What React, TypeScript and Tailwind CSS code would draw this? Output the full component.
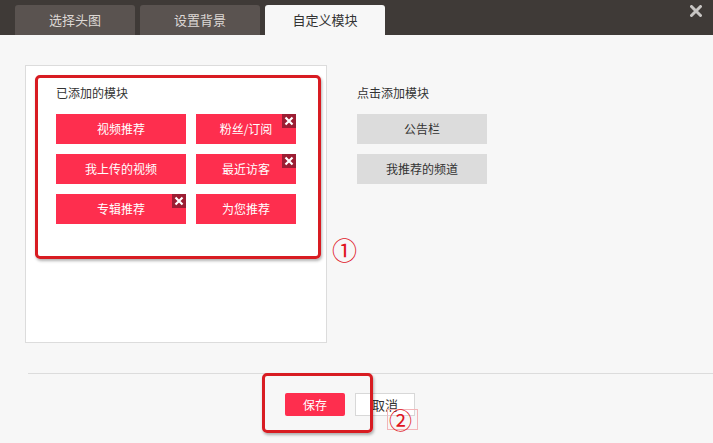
import { ReactNode } from 'react';

const FONT = { fontFamily: '"Noto Sans CJK SC", "Noto Sans", sans-serif' };

function Tab({ label, active }: { label: string; active?: boolean }) {
  return (
    <div
      className={
        'w-[120px] h-[30px] flex items-center justify-center text-[13px] rounded-t-[3px] ' +
        (active ? 'bg-[#f7f7f7] text-[#333]' : 'bg-[#5a5350] text-[#ddd8d5]')
      }
    >
      {label}
    </div>
  );
}

function Added({ label, wide, removable }: { label: string; wide?: boolean; removable?: boolean }) {
  return (
    <div
      className={
        'relative h-[30px] bg-[#fe2e4e] text-white text-[12px] flex items-center justify-center ' +
        (wide ? 'w-[130px]' : 'w-[100px]')
      }
    >
      {label}
      {removable && (
        <span className="absolute top-0 right-0 w-[14px] h-[14px] bg-[#9c1d33] flex items-center justify-center">
          <svg width="10" height="10" viewBox="0 0 10 10">
            <path d="M1.5 1.5 L8.5 8.5 M8.5 1.5 L1.5 8.5" stroke="white" strokeWidth="2.2" />
          </svg>
        </span>
      )}
    </div>
  );
}

function Mark({ children, className }: { children: ReactNode; className: string }) {
  return <div className={'absolute text-[#e0141e] leading-none ' + className}>{children}</div>;
}

export default function App() {
  return (
    <div className="relative w-[713px] h-[443px] overflow-hidden bg-[#f7f7f7]" style={FONT}>
      {/* tabs */}
      <div className="h-[35px] bg-[#3f3a37] flex items-end gap-[5px] pl-[15px]">
        <Tab label="选择头图" />
        <Tab label="设置背景" />
        <Tab label="自定义模块" active />
      </div>
      <button className="absolute top-[5px] right-[11px] w-[12px] h-[12px] flex items-center justify-center">
        <svg width="12" height="12" viewBox="0 0 12 12">
          <path d="M1.5 1.5 L10.5 10.5 M10.5 1.5 L1.5 10.5" stroke="#c8c5c3" strokeWidth="3" strokeLinecap="round" />
        </svg>
      </button>

      {/* body */}
      <div className="flex pt-[30px] pl-[25px]">
        <div className="relative w-[302px] h-[278px] bg-white border border-[#dcdcdc] pl-[30px] pt-[19px]">
          <div className="text-[12px] text-[#333] leading-[16px]">已添加的模块</div>
          <div className="mt-[13px] grid grid-cols-[130px_100px] gap-x-[10px] gap-y-[10px]">
            <Added label="视频推荐" wide />
            <Added label="粉丝/订阅" removable />
            <Added label="我上传的视频" wide />
            <Added label="最近访客" removable />
            <Added label="专辑推荐" wide removable />
            <Added label="为您推荐" />
          </div>
          {/* annotation 1 */}
          <div className="absolute left-[9px] top-[9px] w-[286px] h-[184px] border-[3px] border-[#d81c22] rounded-[5px] shadow-[1px_2px_3px_rgba(0,0,0,0.3)]" />
        </div>

        <div className="ml-[30px] pt-[20px]">
          <div className="text-[12px] text-[#333] leading-[16px]">点击添加模块</div>
          <div className="mt-[13px] flex flex-col gap-[10px]">
            <div className="w-[130px] h-[30px] bg-[#dcdcdc] text-[#333] text-[12px] flex items-center justify-center">公告栏</div>
            <div className="w-[130px] h-[30px] bg-[#dcdcdc] text-[#333] text-[12px] flex items-center justify-center">我推荐的频道</div>
          </div>
        </div>
      </div>
      <Mark className="left-[332px] top-[237px] text-[25px]">①</Mark>

      {/* footer */}
      <div className="ml-[28px] mt-[30px] border-t border-[#dcdcdc] pt-[19px] pl-[257px] flex gap-[10px]">
        <button className="w-[60px] h-[23px] bg-[#fe2e4e] text-white text-[12px] rounded-[2px]">保存</button>
        <button className="w-[60px] h-[23px] bg-white border border-[#d8d8d8] text-[#333] text-[13px] leading-none">取消</button>
      </div>
      <div className="absolute left-[262px] top-[373px] w-[111px] h-[60px] border-[3px] border-[#d81c22] rounded-[5px] shadow-[1px_2px_3px_rgba(0,0,0,0.3)]" />
      <div className="absolute left-[387px] top-[409px] w-[31px] h-[21px] border border-[#f3b5b8]" />
      <Mark className="left-[389px] top-[408px] text-[23px]">②</Mark>
    </div>
  );
}
